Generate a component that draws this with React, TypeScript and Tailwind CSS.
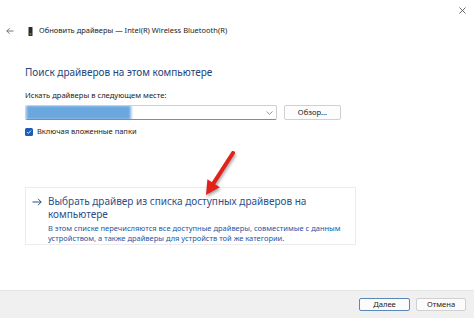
import React from "react";

const font = { fontFamily: '"Noto Sans", "Liberation Sans", sans-serif' };

function BackArrow() {
  return (
    <svg className="w-[8px] h-[8px]" viewBox="0 0 8 8" fill="none" stroke="#555" strokeWidth={0.8}>
      <path d="M7.5 4H0.8M3.6 1.2L0.8 4l2.8 2.8" />
    </svg>
  );
}

function DeviceIcon() {
  return (
    <svg className="w-[5px] h-[9px]" viewBox="0 0 5 9">
      <rect x="0.5" y="0" width="4" height="9" rx="0.6" fill="#2b2b2b" />
      <rect x="1.6" y="6.2" width="1.8" height="1.6" fill="#5a8a3a" />
    </svg>
  );
}

function CloseIcon() {
  return (
    <svg className="w-[7px] h-[7px]" viewBox="0 0 7 7" fill="none" stroke="#444" strokeWidth={0.8}>
      <path d="M0.5 0.5l6 6M6.5 0.5l-6 6" />
    </svg>
  );
}

function Chevron() {
  return (
    <svg className="w-[7px] h-[4px]" viewBox="0 0 7 4" fill="none" stroke="#666" strokeWidth={0.7}>
      <path d="M0.5 0.5L3.5 3.3 6.5 0.5" />
    </svg>
  );
}

function LinkArrow() {
  return (
    <svg className="w-[10px] h-[8px]" viewBox="0 0 10 8" fill="none" stroke="#2b4f8a" strokeWidth={1}>
      <path d="M0.5 4H9.2M6 0.8L9.2 4 6 7.2" />
    </svg>
  );
}

function RedArrow() {
  return (
    <svg
      className="absolute left-0 top-0 w-[474px] h-[318px] pointer-events-none"
      viewBox="0 0 474 318"
      style={{ filter: "drop-shadow(1px 2px 1.5px rgba(0,0,0,0.35))" }}
    >
      <path d="M233 153L213.6 183.2" stroke="#e3211b" strokeWidth={4} strokeLinecap="round" />
      <path d="M206 195L219.8 187.2L207.4 179.2Z" fill="#e3211b" />
    </svg>
  );
}

export default function App() {
  return (
    <div className="relative w-[474px] h-[318px] bg-white flex flex-col overflow-hidden" style={font}>
      <div className="h-[20px] flex items-start justify-end pr-[8px] pt-[7px]">
        <CloseIcon />
      </div>

      <div className="h-[22px] flex items-center pl-[6px]">
        <BackArrow />
        <span className="ml-[14px]">
          <DeviceIcon />
        </span>
        <span className="ml-[6px] text-[7.5px] text-[#222]">
          Обновить драйверы — Intel(R) Wireless Bluetooth(R)
        </span>
      </div>

      <div className="pl-[25px] pr-[20px] flex flex-col">
        <div className="mt-[22px] text-[10px] leading-[16px] text-[#23447a]">
          Поиск драйверов на этом компьютере
        </div>

        <div className="mt-[9px] text-[7.6px] leading-[12px] text-[#222]">
          Искать драйверы в следующем месте:
        </div>

        <div className="mt-[4px] flex items-center gap-[7px]">
          <div className="w-[252px] h-[15px] border border-[#cfcfcf] border-b-[#8a8a8a] rounded-[2px] flex items-center overflow-hidden">
            <div className="w-[105px] h-[15px] bg-[#6aa7df] blur-[1.5px]" />
            <div className="flex-1" />
            <span className="pr-[3px] flex items-center">
              <Chevron />
            </span>
          </div>
          <div className="w-[57px] h-[15px] border border-[#d0d0d0] rounded-[2px] bg-[#fdfdfd] flex items-center justify-center text-[7.6px] text-[#222]">
            Обзор...
          </div>
        </div>

        <div className="mt-[6px] h-[12px] flex items-center gap-[4px]">
          <div className="w-[8px] h-[8px] rounded-[1.5px] bg-[#1a5db6] flex items-center justify-center">
            <svg className="w-[6px] h-[6px]" viewBox="0 0 6 6" fill="none" stroke="#fff" strokeWidth={0.9}>
              <path d="M1 3.1l1.3 1.3L5 1.6" />
            </svg>
          </div>
          <span className="text-[7.5px] text-[#222]">Включая вложенные папки</span>
        </div>

        <div className="mt-[49px] w-[331px] border border-[#ececec] pt-[7px] pb-[1px] pl-[6px] pr-[8px] flex gap-[6px]">
          <div className="h-[13px] flex items-center">
            <LinkArrow />
          </div>
          <div className="flex flex-col">
            <div className="text-[10px] leading-[13px] text-[#2b4f8a]">
              Выбрать драйвер из списка доступных драйверов на компьютере
            </div>
            <div className="mt-[2px] text-[7.5px] leading-[10px] text-[#2256a6]">
              В этом списке перечисляются все доступные драйверы, совместимые с данным устройством, а также
              драйверы для устройств той же категории.
            </div>
          </div>
        </div>
      </div>

      <div className="mt-auto h-[28px] bg-[#f0f0f0] border-t border-[#e3e3e3] flex items-center justify-end gap-[6px] pr-[8px]">
        <div className="w-[51px] h-[13px] rounded-[2px] border border-[#5b86b5] bg-[#fbfbfb] flex items-center justify-center text-[7.6px] text-[#222]">
          Далее
        </div>
        <div className="w-[50px] h-[13px] rounded-[2px] border border-[#d0d0d0] bg-[#fbfbfb] flex items-center justify-center text-[7.6px] text-[#222]">
          Отмена
        </div>
      </div>

      <RedArrow />
    </div>
  );
}
